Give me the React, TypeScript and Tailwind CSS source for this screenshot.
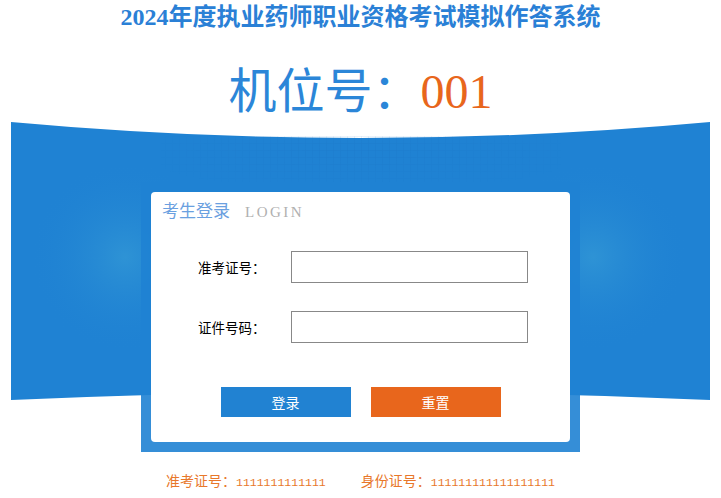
const CJK = "font-['Noto_Sans_CJK_SC',sans-serif]";

function Banner() {
  return (
    <svg
      className="absolute left-[11px] top-0"
      width="699"
      height="278"
      viewBox="0 0 699 278"
    >
      <defs>
        <radialGradient id="spotL" cx="114" cy="135" r="95" gradientUnits="userSpaceOnUse">
          <stop offset="0" stopColor="#2e93d5" />
          <stop offset="1" stopColor="#1f82d3" stopOpacity="0" />
        </radialGradient>
        <radialGradient id="spotR" cx="582" cy="135" r="95" gradientUnits="userSpaceOnUse">
          <stop offset="0" stopColor="#2e93d5" />
          <stop offset="1" stopColor="#1f82d3" stopOpacity="0" />
        </radialGradient>
        <pattern id="grid" width="7" height="7" patternUnits="userSpaceOnUse">
          <path d="M7 0H0V7" fill="none" stroke="#1a6fbf" strokeWidth="0.6" />
        </pattern>
        <radialGradient id="fadeX" cx="0.5" cy="0.3" r="0.55">
          <stop offset="0" stopColor="#fff" />
          <stop offset="1" stopColor="#000" />
        </radialGradient>
        <mask id="gridMask">
          <rect x="150" y="10" width="400" height="70" fill="url(#fadeX)" opacity="0.5" />
        </mask>
      </defs>
      <path d="M0 0 Q349.5 32 699 0 L699 278 Q349.5 262 0 278 Z" fill="#1f82d3" />
      <rect x="0" y="0" width="699" height="270" fill="url(#spotL)" />
      <rect x="0" y="0" width="699" height="270" fill="url(#spotR)" />
      <rect x="150" y="14" width="400" height="66" fill="url(#grid)" mask="url(#gridMask)" />
    </svg>
  );
}

export default function App() {
  return (
    <div className="w-[721px] h-[498px] bg-white overflow-hidden">
      <h1 className="pt-[4px] h-[34px] text-center text-[24px] leading-[26px] font-bold text-[#2a80d6] font-['Liberation_Serif','Noto_Sans_CJK_SC',serif]">
        2024年度执业药师职业资格考试模拟作答系统
      </h1>
      <div className="mt-[28px] h-[60px] flex justify-center items-center text-[48px] leading-[56px] font-['Liberation_Serif','Noto_Sans_CJK_SC',serif]">
        <span className="text-[#2b86d8]">机位号：</span>
        <span className="text-[#e8661c]">001</span>
      </div>

      <div className="relative h-[330px] pt-[60px]">
        <Banner />
        <div className="relative mx-auto w-[439px] h-[270px] p-[10px] bg-[#1f82d3]/90">
          <div className="h-[250px] rounded-[4px] bg-white">
            <div className="pl-[11px] pt-[9px] h-[40px] flex items-baseline font-['Liberation_Serif','Noto_Sans_CJK_SC',serif]">
              <span className="text-[17px] leading-[22px] text-[#6aa0e0]">考生登录</span>
              <span className="ml-[15px] text-[15px] leading-[22px] tracking-[2.5px] text-[#b0b0b0]">
                LOGIN
              </span>
            </div>

            <div className={`mt-[19px] flex flex-col gap-[28px] ${CJK}`}>
              <div className="flex items-center">
                <label className="pl-[47px] w-[140px] text-[13.5px] text-black">准考证号：</label>
                <input className="w-[237px] h-[32px] border border-[#888] outline-none" />
              </div>
              <div className="flex items-center">
                <label className="pl-[47px] w-[140px] text-[13.5px] text-black">证件号码：</label>
                <input className="w-[237px] h-[32px] border border-[#888] outline-none" />
              </div>
            </div>

            <div className={`mt-[44px] flex justify-center gap-[20px] ${CJK}`}>
              <button className="w-[130px] h-[30px] bg-[#2182d2] text-white text-[14px]">登录</button>
              <button className="w-[130px] h-[30px] bg-[#e8661c] text-white text-[14px]">重置</button>
            </div>
          </div>
        </div>
      </div>

      <div className="mt-[19px] flex justify-center items-baseline gap-[35px] text-[14px] leading-[18px] text-[#e8772a] font-['Noto_Sans_CJK_SC',sans-serif]">
        <span>
          准考证号：<span className="font-['Liberation_Mono',monospace] text-[11.5px]">1111111111111</span>
        </span>
        <span>
          身份证号：<span className="font-['Liberation_Mono',monospace] text-[11.5px]">111111111111111111</span>
        </span>
      </div>
    </div>
  );
}
